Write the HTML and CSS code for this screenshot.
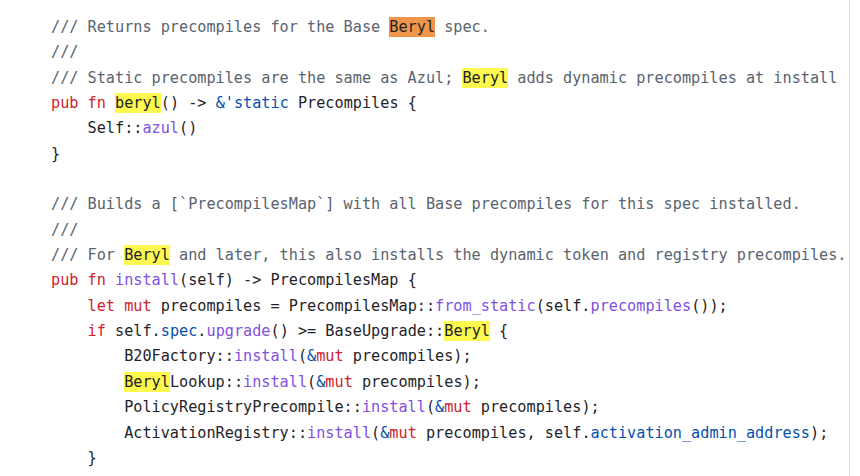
FILE: index.html
```html
<!DOCTYPE html>
<html>
<head>
<meta charset="utf-8">
<link rel="stylesheet" href="styles.css">
</head>
<body>
<div class="code">
<div class="ln"><span class="c">/// Returns precompiles for the Base <span class="hl-cur">Beryl</span> spec.</span></div>
<div class="ln"><span class="c">///</span></div>
<div class="ln"><span class="c">/// Static precompiles are the same as Azul; <span class="hl">Beryl</span> adds dynamic precompiles at install</span></div>
<div class="ln"><span class="k">pub</span> <span class="k">fn</span> <span class="hl">beryl</span>() -&gt; <span class="b">&amp;'static</span> Precompiles {</div>
<div class="ln">    Self::<span class="f">azul</span>()</div>
<div class="ln">}</div>
<div class="ln"> </div>
<div class="ln"><span class="c">/// Builds a [`PrecompilesMap`] with all Base precompiles for this spec installed.</span></div>
<div class="ln"><span class="c">///</span></div>
<div class="ln"><span class="c">/// For <span class="hl">Beryl</span> and later, this also installs the dynamic token and registry precompiles.</span></div>
<div class="ln"><span class="k">pub</span> <span class="k">fn</span> <span class="f">install</span>(self) -&gt; PrecompilesMap {</div>
<div class="ln">    <span class="k">let</span> <span class="k">mut</span> precompiles = PrecompilesMap::<span class="f">from_static</span>(self.<span class="f">precompiles</span>());</div>
<div class="ln">    <span class="k">if</span> self.<span class="b">spec</span>.<span class="f">upgrade</span>() &gt;= BaseUpgrade::<span class="hl">Beryl</span> {</div>
<div class="ln">        B20Factory::<span class="f">install</span>(<span class="b">&amp;</span><span class="k">mut</span> precompiles);</div>
<div class="ln">        <span class="hl">Beryl</span>Lookup::<span class="f">install</span>(<span class="b">&amp;</span><span class="k">mut</span> precompiles);</div>
<div class="ln">        PolicyRegistryPrecompile::<span class="f">install</span>(<span class="b">&amp;</span><span class="k">mut</span> precompiles);</div>
<div class="ln">        ActivationRegistry::<span class="f">install</span>(<span class="b">&amp;</span><span class="k">mut</span> precompiles, self.<span class="b">activation_admin_address</span>);</div>
<div class="ln">    }</div>
</div>
</body>
</html>
```
FILE: styles.css
```css
html, body {
  margin: 0;
  padding: 0;
  background: #ffffff;
}
body {
  width: 860px;
  height: 476px;
  overflow: hidden;
}
.code {
  box-sizing: border-box;
  width: 850px;
  height: 476px;
  border-right: 1px solid #d6dbe1;
  padding: 15px 0 0 51px;
  font-family: "DejaVu Sans Mono", monospace;
  font-size: 15.2px;
  line-height: 25.35px;
  color: #1f2328;
}
.ln {
  white-space: pre;
  height: 25.35px;
}
.c { color: #59636e; }
.k { color: #cf222e; }
.b { color: #0550ae; }
.f { color: #8250df; }
.hl {
  background: #fdf94e;
  color: #1f2328;
  padding: 1px 0;
}
.hl-cur {
  background: #f0964a;
  color: #1f2328;
  padding: 1px 0;
}
```
